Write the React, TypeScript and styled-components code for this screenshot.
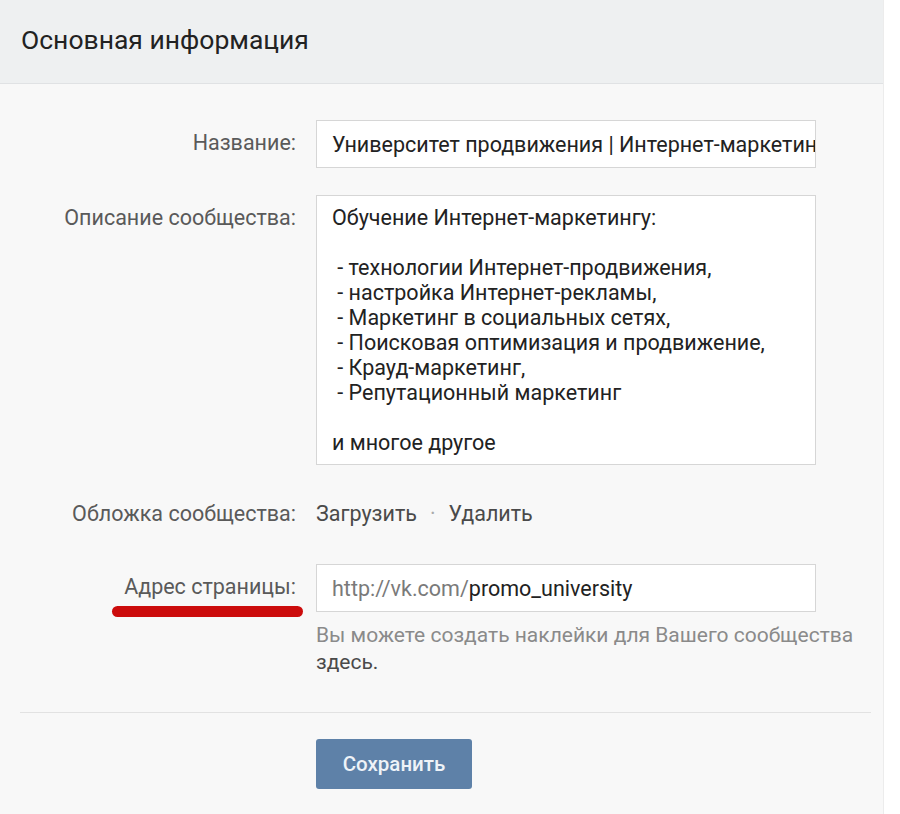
import React from 'react';
import styled, { createGlobalStyle } from 'styled-components';

const GlobalStyle = createGlobalStyle`
  html, body {
    margin: 0;
    padding: 0;
    background: #ffffff;
  }
  body {
    font-family: Roboto, 'Liberation Sans', Arial, sans-serif;
  }
`;

const descriptionLines = [
  'Обучение Интернет-маркетингу:',
  '',
  ' - технологии Интернет-продвижения,',
  ' - настройка Интернет-рекламы,',
  ' - Маркетинг в социальных сетях,',
  ' - Поисковая оптимизация и продвижение,',
  ' - Крауд-маркетинг,',
  ' - Репутационный маркетинг',
  '',
  'и многое другое',
];

export default function App() {
  return (
    <>
      <GlobalStyle />
      <Panel>
        <Header>
          <Title>Основная информация</Title>
        </Header>

        <Form>
          <Row $gap={27}>
            <Label $top={10}>Название:</Label>
            <Input>Университет продвижения | Интернет-маркетинг</Input>
          </Row>

          <Row $gap={36}>
            <Label $top={10}>Описание сообщества:</Label>
            <TextArea>
              {descriptionLines.map((line, i) => (
                <Line key={i}>{line || '\u00a0'}</Line>
              ))}
            </TextArea>
          </Row>

          <Row $gap={38}>
            <Label $top={0}>Обложка сообщества:</Label>
            <Links>
              <span>Загрузить</span>
              <Dot>·</Dot>
              <span>Удалить</span>
            </Links>
          </Row>

          <Row $gap={0}>
            <Label $top={10}>
              Адрес страницы:
              <Underline />
            </Label>
            <div>
              <Input>
                <Prefix>http://vk.com/</Prefix>promo_university
              </Input>
              <Hint>
                Вы можете создать наклейки для Вашего сообщества
                <br />
                <HintLink>здесь.</HintLink>
              </Hint>
            </div>
          </Row>
        </Form>

        <Divider />

        <Footer>
          <SaveButton>Сохранить</SaveButton>
        </Footer>
      </Panel>
    </>
  );
}

const Panel = styled.div`
  width: 884px;
  min-height: 814px;
  background: #f8f8f8;
  border-right: 1px solid #ececec;
  box-sizing: border-box;
`;

const Header = styled.div`
  height: 84px;
  box-sizing: border-box;
  display: flex;
  align-items: center;
  padding: 0 0 4px 21px;
  background: #eef0f1;
  border-bottom: 1px solid #e0e2e4;
`;

const Title = styled.h1`
  margin: 0;
  font-size: 26.5px;
  font-weight: 400;
  color: #222222;
`;

const Form = styled.div`
  padding-top: 36px;
`;

const Row = styled.div<{ $gap: number }>`
  display: grid;
  grid-template-columns: 296px 500px;
  column-gap: 20px;
  margin-bottom: ${({ $gap }) => $gap}px;
`;

const Label = styled.div<{ $top: number }>`
  position: relative;
  padding-top: ${({ $top }) => $top}px;
  text-align: right;
  font-size: 21.5px;
  line-height: 25px;
  color: #5a5a5a;
  white-space: nowrap;
`;

const Underline = styled.span`
  position: absolute;
  left: 112px;
  right: -7px;
  top: 42px;
  height: 11px;
  border-radius: 6px;
  background: #cc0c0c;
`;

const Input = styled.div`
  height: 48px;
  box-sizing: border-box;
  padding: 0 15px;
  display: flex;
  align-items: center;
  overflow: hidden;
  white-space: nowrap;
  background: #ffffff;
  border: 1px solid #d6d6d6;
  font-size: 21.5px;
  color: #222222;
`;

const Prefix = styled.span`
  color: #7a7a7a;
`;

const TextArea = styled.div`
  height: 270px;
  box-sizing: border-box;
  padding: 9px 15px;
  background: #ffffff;
  border: 1px solid #d6d6d6;
  font-size: 21.5px;
  line-height: 25px;
  color: #222222;
`;

const Line = styled.div`
  white-space: pre;
`;

const Links = styled.div`
  display: flex;
  gap: 13px;
  font-size: 21.5px;
  line-height: 25px;
  color: #4a4a4a;
`;

const Dot = styled.span`
  color: #aaaaaa;
`;

const Hint = styled.div`
  margin-top: 10px;
  font-size: 21px;
  line-height: 27px;
  color: #8a8a8a;
  white-space: nowrap;
`;

const HintLink = styled.span`
  color: #4a4a4a;
`;

const Divider = styled.div`
  margin: 36px 12px 0 20px;
  height: 1px;
  background: #e2e2e2;
`;

const Footer = styled.div`
  padding: 26px 0 0 316px;
`;

const SaveButton = styled.button`
  width: 156px;
  height: 50px;
  border: none;
  border-radius: 3px;
  background: #5e81a8;
  color: #eef3f8;
  font-family: Roboto, 'Liberation Sans', Arial, sans-serif;
  font-size: 20.5px;
  font-weight: 500;
  cursor: pointer;
`;
